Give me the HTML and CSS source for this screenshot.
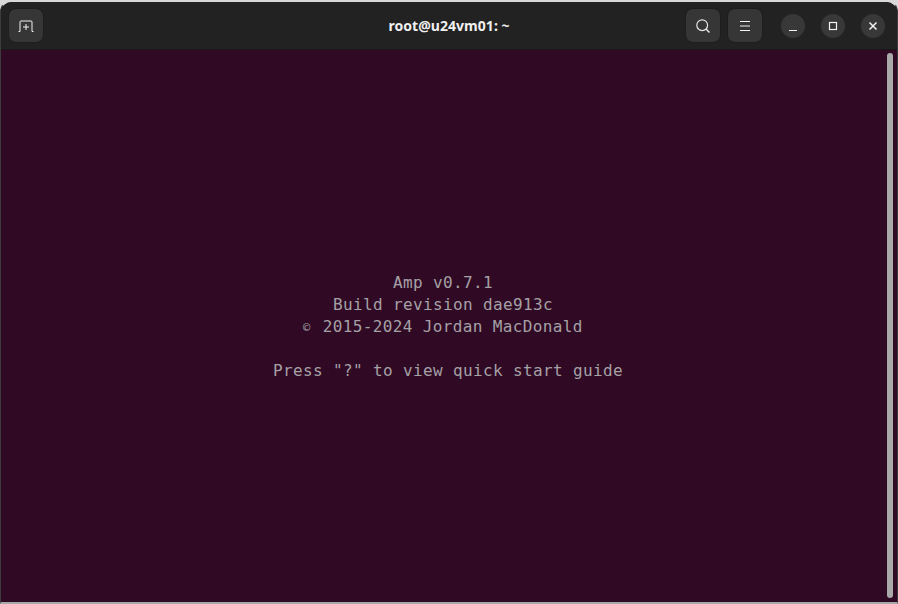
FILE: index.html
```html
<!DOCTYPE html>
<html lang="en">
<head>
<meta charset="utf-8">
<title>root@u24vm01: ~</title>
<link rel="stylesheet" href="styles.css">
</head>
<body>
<div class="window">
  <header class="titlebar">
    <div class="side">
      <button class="tool" aria-label="New tab">
        <svg width="16" height="16" viewBox="0 0 16 16" fill="none" stroke="#f2f2f2" stroke-width="1"><path d="M0.5 13.5h1.5V4a1 1 0 0 1 1-1h10a1 1 0 0 1 1 1v9.5h1.5M8 6v6M5 9h6"/></svg>
      </button>
    </div>
    <h1 class="title">root@u24vm01: ~</h1>
    <div class="side right">
      <button class="tool" aria-label="Search">
        <svg width="16" height="16" viewBox="0 0 16 16" fill="none" stroke="#e6e6e6" stroke-width="1.2"><circle cx="7.2" cy="7.2" r="5.4"/><path d="M11.2 11.2l3.3 3.3" stroke-width="1.5"/></svg>
      </button>
      <button class="tool menu" aria-label="Menu">
        <svg width="16" height="16" viewBox="0 0 16 16" stroke="#f2f2f2" stroke-width="1"><path d="M3 3.5h10M3 8h10M3 12.5h10"/></svg>
      </button>
      <div class="controls">
        <button class="ctl" aria-label="Minimize"><svg width="16" height="16" viewBox="0 0 16 16" stroke="#f2f2f2" stroke-width="1.2"><path d="M4 12.5h8"/></svg></button>
        <button class="ctl" aria-label="Maximize"><svg width="16" height="16" viewBox="0 0 16 16" fill="none" stroke="#f2f2f2" stroke-width="1.2"><rect x="4.5" y="4.5" width="7" height="7"/></svg></button>
        <button class="ctl" aria-label="Close"><svg width="16" height="16" viewBox="0 0 16 16" stroke="#f2f2f2" stroke-width="1.5"><path d="M4.5 4.5l7 7M11.5 4.5l-7 7"/></svg></button>
      </div>
    </div>
  </header>
  <main class="terminal">
    <div class="splash">
      <div class="line col-12">Amp v0.7.1</div>
      <div class="line col-6">Build revision dae913c</div>
      <div class="line col-3"><span class="copy">©</span> 2015-2024 Jordan MacDonald</div>
      <div class="line">&nbsp;</div>
      <div class="line">Press "?" to view quick start guide</div>
    </div>
    <div class="scrollbar"></div>
  </main>
</div>
</body>
</html>
```
FILE: styles.css
```css
* { box-sizing: border-box; }
html, body { height: 100%; margin: 0; }
body { background: #d9d9d9; overflow: hidden; }
.window {
  height: 604px;
  display: flex;
  flex-direction: column;
  border-radius: 12px 12px 0 0;
  overflow: hidden;
  border: 1px solid #3c3c3c;
  border-top: 2px solid #d9d9d9;
  border-bottom: 2px solid #a9a8a9;
  background: #300a24;
}
.titlebar {
  height: 48px;
  flex: none;
  display: flex;
  align-items: center;
  justify-content: space-between;
  position: relative;
  padding: 0 12px 0 8px;
  background: #222222;
  border-bottom: 1px solid #191919;
}
.side { display: flex; align-items: center; }
.right { gap: 8px; }
.title {
  position: absolute;
  left: 0;
  right: 0;
  margin: 0;
  text-align: center;
  font: 700 14px/20px "Noto Sans", "Open Sans", sans-serif;
  letter-spacing: .05px;
  color: #f0f0f0;
}
.tool {
  width: 34px;
  height: 33px;
  padding: 0;
  display: flex;
  align-items: center;
  justify-content: center;
  background: #363636;
  border: 0;
  border-radius: 7px;
  box-shadow: 0 0 0 1px #1e1e1e;
}
.controls { display: flex; gap: 16px; margin-left: 11px; }
.ctl {
  width: 24px;
  height: 24px;
  padding: 0;
  display: flex;
  align-items: center;
  justify-content: center;
  background: #383838;
  border: 0;
  border-radius: 50%;
}
.terminal {
  flex: 1;
  position: relative;
  display: flex;
  align-items: center;
  justify-content: center;
  padding: 2px 2px 0 0;
  background: #300a24;
}
.splash {
  width: 350px;
  font: 16px/22px "DejaVu Sans Mono", monospace;
  letter-spacing: .37px;
  color: #a5a0a6;
}
.line { height: 22px; white-space: pre; }
.col-12 { padding-left: 120px; }
.col-6 { padding-left: 60px; }
.col-3 { padding-left: 30px; }
.copy {
  display: inline-block;
  width: 9.63px;
  font-size: 12px;
  letter-spacing: 0;
  line-height: 1;
}
.scrollbar {
  position: absolute;
  top: 3px;
  right: 4px;
  bottom: 4px;
  width: 6px;
  border-radius: 3px;
  background: #aaa9aa;
}
```
